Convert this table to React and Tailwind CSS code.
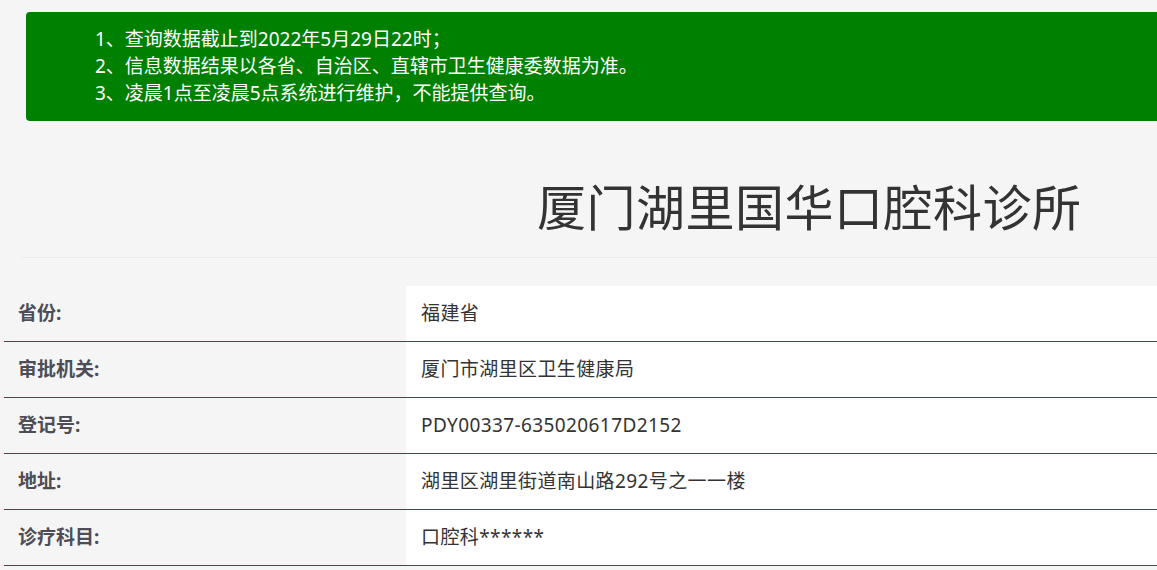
const rows = [
  { label: '省份:', value: '福建省' },
  { label: '审批机关:', value: '厦门市湖里区卫生健康局' },
  { label: '登记号:', value: 'PDY00337-635020617D2152' },
  { label: '地址:', value: '湖里区湖里街道南山路292号之一一楼' },
  { label: '诊疗科目:', value: '口腔科******' },
]

function App() {
  return (
    <div
      className="w-full h-[570px] overflow-hidden bg-[#f5f5f5]"
      style={{ fontFamily: '"Noto Sans", "Noto Sans CJK SC", sans-serif' }}
    >
      {/* Notice */}
      <div className="ml-[26px] mt-[12px] h-[109px] rounded-l-[4px] bg-[#008000] pl-[69px] pt-[14px] text-[19px] leading-[27px] text-white">
        <p>1、查询数据截止到2022年5月29日22时；</p>
        <p>2、信息数据结果以各省、自治区、直辖市卫生健康委数据为准。</p>
        <p>3、凌晨1点至凌晨5点系统进行维护，不能提供查询。</p>
      </div>

      {/* Title */}
      <h1 className="mt-[56px] pl-[537px] text-[49px] leading-[60px] text-[#333333] tracking-[0.5px]">
        厦门湖里国华口腔科诊所
      </h1>
      <div className="ml-[22px] mt-[20px] h-px bg-[#ebebeb]" />

      {/* Detail table */}
      <div className="ml-[4px] mt-[28px]">
        {rows.map((row) => (
          <div key={row.label} className="flex h-[56px] border-b border-[#16604a]">
            <div className="w-[402px] flex items-center pl-[14px] text-[19px] font-bold text-[#4d4d57]">
              {row.label}
            </div>
            <div className="flex-1 flex items-center bg-white pl-[15px] text-[19px] tracking-[0.4px] text-[#333333]">
              {row.value}
            </div>
          </div>
        ))}
      </div>
    </div>
  )
}

export default App
